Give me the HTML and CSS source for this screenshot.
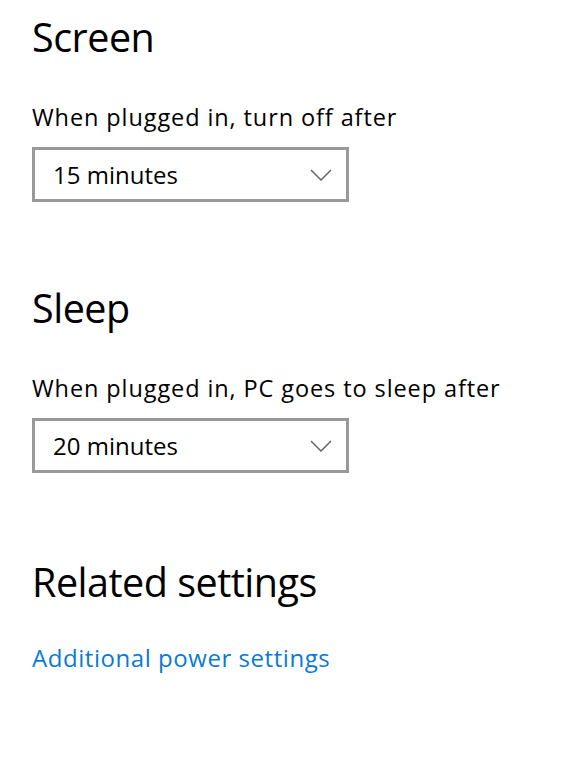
FILE: index.html
```html
<!DOCTYPE html>
<html>
<head>
<meta charset="utf-8">
<link rel="stylesheet" href="styles.css">
</head>
<body>
<main class="page">
  <section class="group">
    <h2 class="heading">Screen</h2>
    <p class="label">When plugged in, turn off after</p>
    <div class="select">
      <span class="select-value">15 minutes</span>
      <svg class="chevron" viewBox="0 0 22 12" width="22" height="12"><path d="M1 1 L11 11 L21 1" fill="none" stroke="#666" stroke-width="1.5"/></svg>
    </div>
  </section>
  <section class="group">
    <h2 class="heading">Sleep</h2>
    <p class="label">When plugged in, PC goes to sleep after</p>
    <div class="select">
      <span class="select-value">20 minutes</span>
      <svg class="chevron" viewBox="0 0 22 12" width="22" height="12"><path d="M1 1 L11 11 L21 1" fill="none" stroke="#666" stroke-width="1.5"/></svg>
    </div>
  </section>
  <section class="group group-related">
    <h2 class="heading">Related settings</h2>
    <a class="link" href="#">Additional power settings</a>
  </section>
</main>
</body>
</html>
```
FILE: styles.css
```css
html, body {
  margin: 0;
  padding: 0;
  background: #fff;
}
body {
  font-family: "Open Sans", "Noto Sans", sans-serif;
  color: #000;
}
.page {
  padding: 11px 0 0 32px;
  display: flex;
  flex-direction: column;
}
.group {
  display: flex;
  flex-direction: column;
  align-items: flex-start;
}
.group + .group {
  margin-top: 80px;
}
.group + .group-related {
  margin-top: 83px;
}
.heading {
  margin: 0;
  font-weight: 400;
  font-size: 39.5px;
  letter-spacing: -0.5px;
  line-height: 52px;
}
.label {
  margin: 39px 0 0;
  font-size: 23.5px;
  letter-spacing: 0.9px;
  line-height: 30px;
}
.select {
  margin-top: 15px;
  box-sizing: border-box;
  width: 317px;
  height: 55px;
  border: 3px solid #999;
  display: flex;
  align-items: center;
  justify-content: space-between;
  padding: 0 14px 0 18px;
}
.select-value {
  font-size: 24px;
}
.chevron {
  display: block;
}
.link {
  display: block;
  margin-top: 34px;
  font-size: 24px;
  letter-spacing: 0.55px;
  line-height: 32px;
  color: #0a7ad8;
  text-decoration: none;
}
```
